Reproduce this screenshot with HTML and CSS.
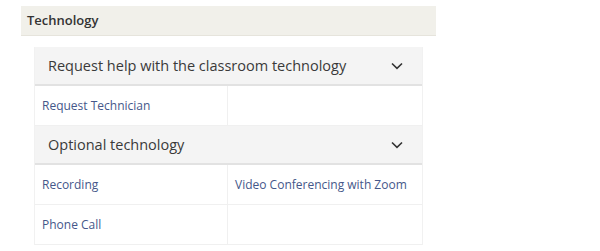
FILE: index.html
```html
<!DOCTYPE html>
<html lang="en">
<head>
    <meta charset="UTF-8">
    <title>Technology</title>
    <link rel="stylesheet" href="styles.css">
</head>
<body>
    <div class="section">
        <div class="section-title">Technology</div>

        <div class="panel">
            <div class="panel-head">
                <span>Request help with the classroom technology</span>
                <svg class="chevron" width="12" height="8" viewBox="0 0 12 8"><path d="M1 1.5 L6 6.3 L11 1.5" fill="none" stroke="#333" stroke-width="1.6"/></svg>
            </div>
            <div class="grid">
                <a class="cell" href="#">Request Technician</a>
                <div class="cell"></div>
            </div>

            <div class="panel-head">
                <span>Optional technology</span>
                <svg class="chevron" width="12" height="8" viewBox="0 0 12 8"><path d="M1 1.5 L6 6.3 L11 1.5" fill="none" stroke="#333" stroke-width="1.6"/></svg>
            </div>
            <div class="grid">
                <a class="cell" href="#">Recording</a>
                <a class="cell" href="#">Video Conferencing with Zoom</a>
                <a class="cell" href="#">Phone Call</a>
                <div class="cell"></div>
            </div>
        </div>
    </div>
</body>
</html>
```

FILE: styles.css
```css
/* page basics */
body {
    margin: 0;
    padding: 6px 0 0 21px;
    font-family: "Open Sans", Arial, sans-serif;
    color: #333;
    background-color: #fff;
}

.section {
    width: 415px;
}

.section-title {
    background-color: #f1f0ea; /* beige strip */
    border-bottom: 1px solid #e6e4dc;
    height: 29px;
    line-height: 28px;
    padding-left: 6px;
    font-size: 13px;
    font-weight: 600;
}

.panel {
    margin: 11px 13px 0 13px;
    border-left: 1px solid #f1f1f1;
    border-right: 1px solid #f1f1f1;
}

.panel-head {
    display: flex;
    align-items: center;
    justify-content: space-between;
    height: 37px;
    padding: 0 19px 0 13px;
    background-color: #f4f4f4;
    border-bottom: 2px solid #e2e2e2;
    font-size: 14.5px;
    color: #3a3a3a;
}

.chevron {
    display: block;
}

.grid {
    display: grid;
    grid-template-columns: 193px 1fr;
}

.cell {
    height: 39px;
    line-height: 40px;
    padding-left: 7px;
    border-bottom: 1px solid #f0f0f0;
    font-size: 12px;
    color: #45578a; /* link blue */
    text-decoration: none;
}

.cell:nth-child(odd) {
    border-right: 1px solid #f0f0f0;
}
```
